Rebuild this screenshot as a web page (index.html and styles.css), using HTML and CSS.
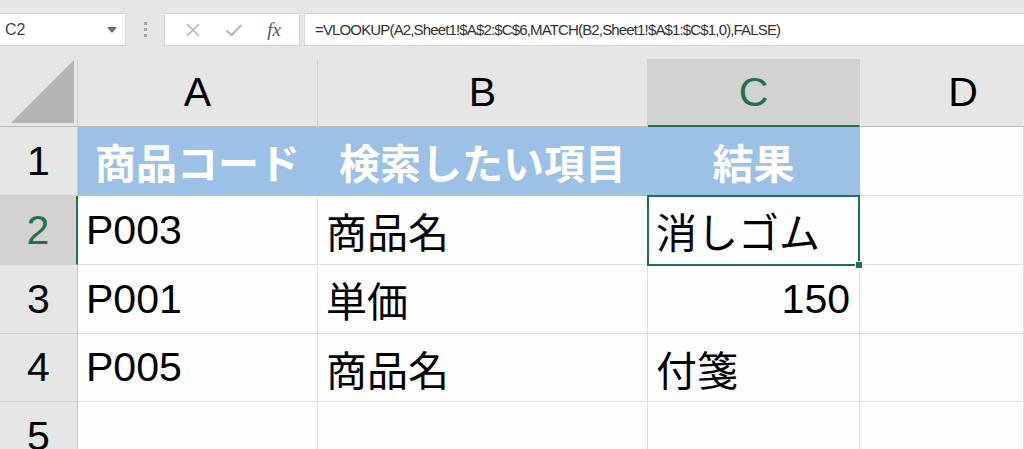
FILE: index.html
```html
<!DOCTYPE html>
<html lang="ja">
  <head>
    <title>VLOOKUP MATCH</title>
    <link rel="stylesheet" href="styles.css">
  </head>
  <body>
    <div class="toolbar">
      <div class="namebox">
        <span>C2</span>
        <svg class="caret" width="10" height="6" viewBox="0 0 10 6"><path d="M0 0H10L5 6Z" fill="#6b6b6b"/></svg>
      </div>
      <div class="grip"><i></i><i></i><i></i></div>
      <div class="buttons">
        <svg width="16" height="16" viewBox="0 0 16 16"><path d="M2 2L14 14M14 2L2 14" stroke="#b8b8b8" stroke-width="1.6" fill="none"/></svg>
        <svg width="18" height="16" viewBox="0 0 18 16"><path d="M1.5 8.5L6.5 13L16.5 3" stroke="#b8b8b8" stroke-width="2.2" fill="none"/></svg>
        <span class="fx">fx</span>
      </div>
      <div class="formula">=VLOOKUP(A2,Sheet1!$A$2:$C$6,MATCH(B2,Sheet1!$A$1:$C$1,0),FALSE)</div>
    </div>

    <div class="sheet">
      <div class="corner"><svg width="64" height="64" viewBox="0 0 64 64"><path d="M63 0V63H0Z" fill="#b4b4b4"/></svg></div>
      <div class="colhead">A</div>
      <div class="colhead">B</div>
      <div class="colhead active">C</div>
      <div class="colhead edge">D</div>

      <div class="rowhead">1</div>
      <div class="cell title">商品コード</div>
      <div class="cell title">検索したい項目</div>
      <div class="cell title">結果</div>
      <div class="cell"></div>

      <div class="rowhead active">2</div>
      <div class="cell">P003</div>
      <div class="cell">商品名</div>
      <div class="cell selected">消しゴム</div>
      <div class="cell"></div>

      <div class="rowhead">3</div>
      <div class="cell">P001</div>
      <div class="cell">単価</div>
      <div class="cell num">150</div>
      <div class="cell"></div>

      <div class="rowhead">4</div>
      <div class="cell">P005</div>
      <div class="cell">商品名</div>
      <div class="cell">付箋</div>
      <div class="cell"></div>

      <div class="rowhead">5</div>
      <div class="cell"></div>
      <div class="cell"></div>
      <div class="cell"></div>
      <div class="cell"></div>
    </div>
  </body>
</html>
```

FILE: styles.css
```css
body {
  margin: 0;
  background-color: #e6e6e6;
  font-family: "Liberation Sans", "Noto Sans CJK JP", sans-serif;
  overflow: hidden;
}
.toolbar {
  display: flex;
  align-items: flex-start;
  height: 59px;
  padding-top: 13px;
  box-sizing: border-box;
}
.namebox {
  display: flex;
  align-items: center;
  justify-content: space-between;
  width: 126px;
  height: 33px;
  box-sizing: border-box;
  padding: 0 8px 0 5px;
  background-color: #fff;
  border: 1px solid #d6d6d6;
  border-left: none;
  font-size: 16px;
  color: #444;
}
.grip {
  display: flex;
  flex-direction: column;
  gap: 3px;
  width: 38px;
  align-items: center;
  padding-top: 9px;
}
.grip i {
  display: block;
  width: 3px;
  height: 3px;
  background-color: #a6a6a6;
}
.buttons {
  display: flex;
  align-items: center;
  justify-content: space-around;
  width: 136px;
  height: 33px;
  box-sizing: border-box;
  padding: 0 6px 0 8px;
  background-color: #fff;
  border: 1px solid #d6d6d6;
}
.fx {
  font-family: "Liberation Serif", serif;
  font-style: italic;
  font-size: 19px;
  color: #555;
}
.formula {
  flex: 1;
  margin-left: 4px;
  height: 33px;
  box-sizing: border-box;
  padding-left: 10px;
  line-height: 31px;
  background-color: #fff;
  border: 1px solid #d6d6d6;
  border-right: none;
  font-size: 15px;
  letter-spacing: -0.85px;
  color: #333;
  white-space: nowrap;
}
.sheet {
  display: grid;
  grid-template-columns: 78px 240px 330px 212px 1fr;
  grid-template-rows: 68px 69px 69px 69px 68px 69px;
  font-size: 41px;
  color: #000;
}
.corner {
  display: flex;
  align-items: flex-end;
  justify-content: flex-end;
  padding: 0 2px 2px 0;
  border-right: 1px solid #d0d0d0;
  border-bottom: 1px solid #bdbdbd;
}
.colhead {
  display: flex;
  align-items: center;
  justify-content: center;
  border-right: 1px solid #d0d0d0;
  border-bottom: 1px solid #bdbdbd;
}
.colhead.edge {
  padding-left: 42px;
  border-right: none;
}
.colhead.active {
  background-color: #d2d2d2;
  color: #217346;
  border-bottom: 2px solid #217346;
}
.rowhead {
  display: flex;
  align-items: center;
  justify-content: center;
  border-right: 1px solid #c8c8c8;
  border-bottom: 1px solid #d0d0d0;
}
.rowhead.active {
  background-color: #d2d2d2;
  color: #217346;
  border-right: 2px solid #217346;
}
.cell {
  display: flex;
  align-items: center;
  padding: 0 9px 0 8px;
  background-color: #fdfefe;
  border-right: 1px solid #e1e1e1;
  border-bottom: 1px solid #e1e1e1;
  white-space: nowrap;
}
.title {
  justify-content: center;
  padding: 0;
  background-color: #9bc2e6;
  border-color: #9bc2e6;
  color: #fff;
  font-weight: bold;
}
.num {
  justify-content: flex-end;
}
.selected {
  position: relative;
}
.selected::before {
  content: "";
  position: absolute;
  top: -1px;
  left: -1px;
  right: -1px;
  bottom: -2px;
  border: 2px solid #217346;
}
.selected::after {
  content: "";
  position: absolute;
  right: -4px;
  bottom: -5px;
  width: 6px;
  height: 6px;
  background-color: #217346;
  border: 1px solid #fff;
}
```
